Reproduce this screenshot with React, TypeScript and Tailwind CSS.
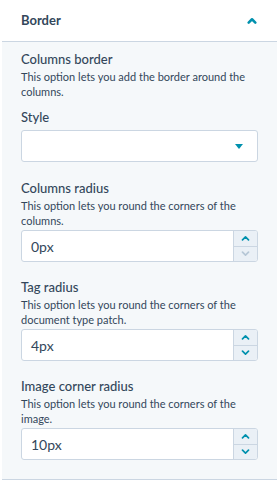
import React from "react";

const TEAL = "#0091ae";

function ChevronUp({ className = "", color = TEAL, w = 3 }: { className?: string; color?: string; w?: number }) {
  return (
    <svg className={className} viewBox="0 0 12 8" fill="none" stroke={color} strokeWidth={w} strokeLinecap="round" strokeLinejoin="round">
      <path d="M2 6.5 6 2.5l4 4" />
    </svg>
  );
}

function ChevronDown({ className = "", color = TEAL, w = 3 }: { className?: string; color?: string; w?: number }) {
  return (
    <svg className={className} viewBox="0 0 12 8" fill="none" stroke={color} strokeWidth={w} strokeLinecap="round" strokeLinejoin="round">
      <path d="M2 1.5 6 5.5l4-4" />
    </svg>
  );
}

function Field({
  title,
  desc,
  value,
  downDisabled,
  first,
}: {
  title: string;
  desc: string;
  value: string;
  downDisabled?: boolean;
  first?: boolean;
}) {
  return (
    <div className={first ? "mt-[16px]" : "mt-[15px]"}>
      <p className="text-[13px] leading-5 font-medium text-[#33475b]">{title}</p>
      <p className="text-[11px] leading-[15px] text-[#33475b]">{desc}</p>
      <div className="mt-[2px] flex h-[32px] rounded-[3px] border border-[#cbd6e2] bg-white overflow-hidden">
        <div className="flex-1 flex items-center pl-[9px] text-[14px] text-[#33475b]">{value}</div>
        <div className="w-[24px] flex flex-col border-l border-[#cbd6e2] bg-[#eaf0f6]">
          <button className="flex-1 flex items-center justify-center border-b border-[#cbd6e2]">
            <ChevronUp className="w-[9px] h-[6px]" w={2.2} />
          </button>
          <button className="flex-1 flex items-center justify-center">
            <ChevronDown className="w-[9px] h-[6px]" w={2.2} color={downDisabled ? "#b6c7d6" : TEAL} />
          </button>
        </div>
      </div>
    </div>
  );
}

export default function App() {
  return (
    <div className="w-[279px] h-[481px] bg-white text-[#33475b]" style={{ fontFamily: "Lato, 'Noto Sans', sans-serif" }}>
      {/* Cabecera */}
      <div className="h-[41px] flex items-center justify-between pl-[21px] pr-[22px]">
        <span className="text-[13px] font-bold">Border</span>
        <ChevronUp className="w-[10px] h-[7px]" w={3} />
      </div>

      {/* Panel */}
      <div className="mx-[2px] bg-[#f5f8fa] border-t border-b border-[#cbd6e2] px-[19px] pt-[7px] pb-[19px]">
        <p className="text-[13px] leading-5 font-medium">Columns border</p>
        <p className="text-[11px] leading-[15px]">This option lets you add the border around the columns.</p>

        <p className="mt-[8px] text-[13px] leading-5 font-medium">Style</p>
        <div className="mt-[3px] h-[32px] flex items-center justify-end pr-[14px] rounded-[3px] border border-[#cbd6e2] bg-white">
          <svg className="w-[8px] h-[5px]" viewBox="0 0 8 5">
            <path d="M0 0h8L4 5z" fill={TEAL} />
          </svg>
        </div>

        <Field
          first
          title="Columns radius"
          desc="This option lets you round the corners of the columns."
          value="0px"
          downDisabled
        />
        <Field title="Tag radius" desc="This option lets you round the corners of the document type patch." value="4px" />
        <Field title="Image corner radius" desc="This option lets you round the corners of the image." value="10px" />
      </div>
    </div>
  );
}
